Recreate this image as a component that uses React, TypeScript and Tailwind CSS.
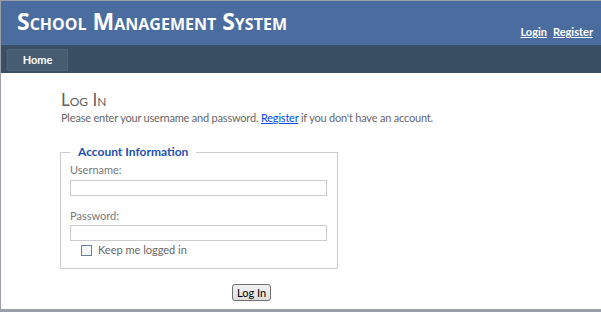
import React from "react";

const font = { fontFamily: 'Lato, "Open Sans", sans-serif' };

export default function App() {
  return (
    <div
      className="w-[601px] h-[312px] overflow-hidden bg-[#9ba0a8] pt-px pl-px pb-[3px]"
      style={font}
    >
      <div className="h-full bg-white flex flex-col">
        <header className="shrink-0 h-[44px] bg-[#4b6c9e] flex items-start justify-between pl-4 pr-[8px]">
          <h1
            className="text-white font-bold text-[23px] [font-variant:small-caps] leading-none mt-[9px]"
            style={{ fontFamily: '"Open Sans", sans-serif' }}
          >
            School Management System
          </h1>
          <div className="flex gap-[6px] mt-[23px] text-[11px] font-bold text-white">
            <a className="underline">Login</a>
            <a className="underline">Register</a>
          </div>
        </header>
        <nav className="shrink-0 h-[28px] bg-[#3a4f63] pl-[6px] pt-[4px]">
          <div className="w-[61px] h-[22px] bg-[#465c71] border border-[#4e667d] text-white text-[11px] font-bold flex items-center justify-center">
            Home
          </div>
        </nav>
        <main className="pl-[60px] pt-[18px]">
          <h2 className="text-[#5f5f5f] text-[17px] [font-variant:small-caps] leading-none font-normal">
            Log In
          </h2>
          <p className="text-[#666] text-[11px] leading-none mt-[4px] tracking-[-0.2px]">
            Please enter your username and password.{" "}
            <a className="text-[#034af3] underline">Register</a> if you don't have an account.
          </p>
          <fieldset className="mt-[20px] w-[278px] -ml-px border border-[#ccc] px-[9px] pb-[9px]">
            <legend className="px-[8px] text-[12px] font-bold text-[#1c4fb0]">
              Account Information
            </legend>
            <label className="block text-[11px] text-[#777] mt-[1px]">Username:</label>
            <div className="h-[16px] w-[257px] border border-[#ccc] mt-[1px]" />
            <label className="block text-[11px] text-[#777] mt-[12px]">Password:</label>
            <div className="h-[16px] w-[257px] border border-[#ccc] mt-[1px]" />
            <div className="flex items-center gap-[6px] ml-[11px] mt-[1px]">
              <span className="w-[11px] h-[11px] border border-[#6b7f99] bg-[#f4f6f8]" />
              <span className="text-[11px] text-[#666]">Keep me logged in</span>
            </div>
          </fieldset>
          <div className="pl-[171px] mt-[10px]">
            <button className="h-[17px] px-[4px] text-[11px] text-black border border-[#707070] rounded-[3px] bg-gradient-to-b from-[#f2f2f2] to-[#dddddd] leading-none">
              Log In
            </button>
          </div>
        </main>
      </div>
    </div>
  );
}
